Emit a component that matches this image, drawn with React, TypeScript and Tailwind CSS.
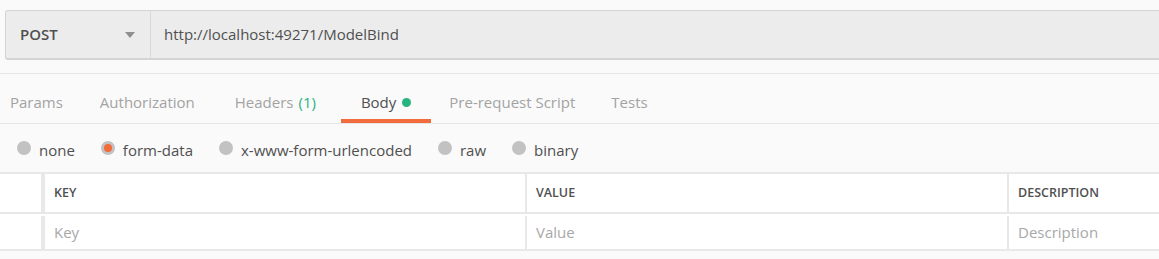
import React from 'react';

const tabs = [
  { label: 'Params', pad: 'pr-[17px]' },
  { label: 'Authorization', pad: 'px-[20px]' },
  { label: 'Headers', count: '(1)', pad: 'px-[20px]' },
  { label: 'Body', active: true, dot: true, pad: 'ml-[5px] px-[20px]' },
  { label: 'Pre-request Script', pad: 'px-[18px]' },
  { label: 'Tests', pad: 'px-[18px]' },
];

const bodyTypes = [
  { label: 'none' },
  { label: 'form-data', checked: true },
  { label: 'x-www-form-urlencoded' },
  { label: 'raw' },
  { label: 'binary' },
];

const Radio = ({ checked }: { checked?: boolean }) => (
  <span className="flex h-[14px] w-[14px] items-center justify-center rounded-full bg-[#c2c2c2]">
    {checked && <span className="h-[8px] w-[8px] rounded-full bg-[#f26b3a]" />}
  </span>
);

export default function App() {
  return (
    <div className="h-[259px] w-[1159px] overflow-hidden bg-[#fafafa] font-['Open_Sans',sans-serif] text-[15px] text-[#505050]">
      {/* Request bar */}
      <div className="pl-[5px] pt-[10px]">
        <div className="-mr-[10px] flex h-[50px] overflow-hidden rounded-[3px] border border-b-2 border-[#d4d4d4] bg-[#ececec]">
          <div className="flex w-[145px] items-center justify-between border-r border-[#d9d9d9] pl-[14px] pr-[15px]">
            <span className="font-semibold">POST</span>
            <svg width="10" height="6" viewBox="0 0 10 6">
              <path d="M0 0 L10 0 L5 6 Z" fill="#8f8f8f" />
            </svg>
          </div>
          <div className="flex flex-1 items-center pl-[13px]">http://localhost:49271/ModelBind</div>
        </div>
      </div>

      {/* Tabs */}
      <div className="mt-[13px] flex h-[51px] border-t border-b border-[#e6e6e6] pl-[10px]">
        {tabs.map((t) => (
          <div
            key={t.label}
            className={`relative flex h-full items-center pt-[7px] ${t.pad} ${
              t.active ? 'text-[#505050]' : 'text-[#a3a3a3]'
            }`}
          >
            <span>{t.label}</span>
            {t.count && <span className="ml-[5px] text-[#26b47f]">{t.count}</span>}
            {t.dot && <span className="ml-[6px] h-[9px] w-[9px] rounded-full bg-[#26b47f]" />}
            {t.active && <span className="absolute bottom-0 left-0 right-0 h-[4px] bg-[#f26b3a]" />}
          </div>
        ))}
      </div>

      {/* Body types */}
      <div className="flex h-[48px] items-center gap-[26px] pl-[17px]">
        {bodyTypes.map((b) => (
          <label key={b.label} className="flex items-center gap-[8px]">
            <Radio checked={b.checked} />
            <span className="pt-[4px]">{b.label}</span>
          </label>
        ))}
      </div>

      {/* Params table */}
      <div className="border-t-2 border-[#e8e8e8]">
        <div className="flex h-[40px] border-b-2 border-[#e8e8e8] bg-white text-[12.5px] font-semibold text-[#505050]">
          <div className="w-[41px]" />
          <div className="flex w-[484px] items-center border-l-4 border-[#e8e8e8] pl-[9px]">KEY</div>
          <div className="flex w-[482px] items-center border-l-2 border-[#e8e8e8] pl-[9px]">VALUE</div>
          <div className="flex flex-1 items-center border-l-2 border-[#e8e8e8] pl-[9px]">DESCRIPTION</div>
        </div>
        <div className="flex h-[37px] border-b-2 border-[#e8e8e8] bg-white pt-[2px] text-[#a8a8a8]">
          <div className="w-[41px]" />
          <div className="flex w-[484px] items-center border-l-4 border-[#e8e8e8] pl-[9px]">Key</div>
          <div className="flex w-[482px] items-center border-l-2 border-[#e8e8e8] pl-[9px]">Value</div>
          <div className="flex flex-1 items-center border-l-2 border-[#e8e8e8] pl-[9px]">Description</div>
        </div>
      </div>
    </div>
  );
}
